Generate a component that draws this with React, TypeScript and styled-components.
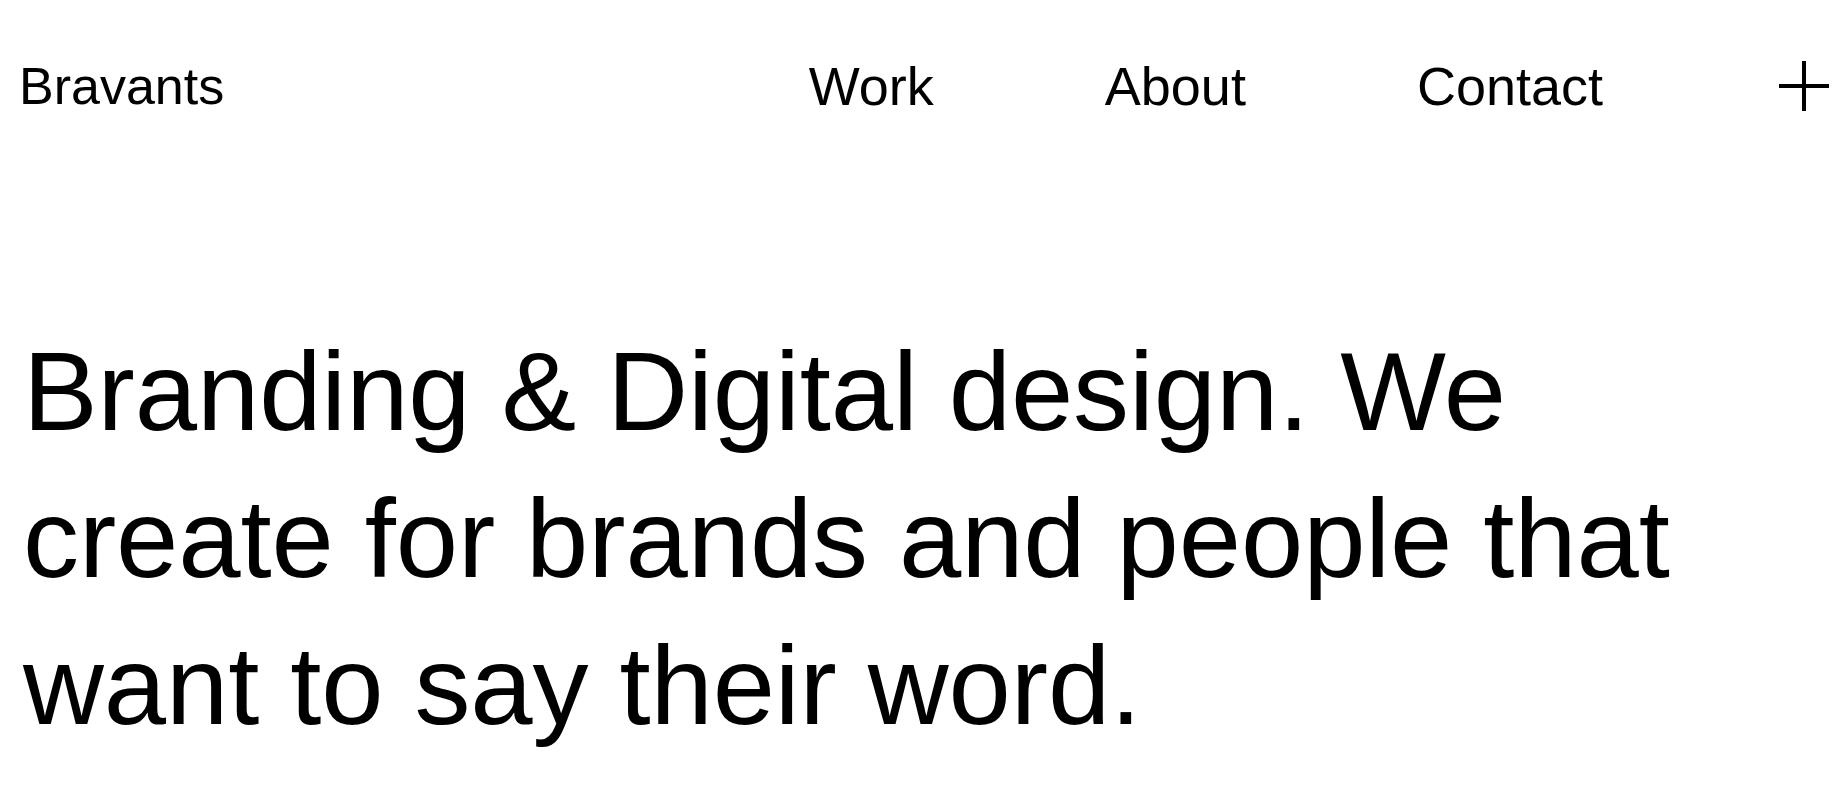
import React from "react";
import styled, { createGlobalStyle } from "styled-components";

const GlobalStyle = createGlobalStyle`
  html, body {
    margin: 0;
    padding: 0;
    background: #ffffff;
    color: #000000;
    font-family: "Liberation Sans", Arial, Helvetica, sans-serif;
    overflow: hidden;
  }
  * { box-sizing: border-box; }
`;

const Page = styled.div`
  width: 1841px;
  height: 797px;
  overflow: hidden;
  background: #fff;
`;

const Header = styled.header`
  display: flex;
  align-items: center;
  padding: 59px 12px 0 19px;
`;

const Logo = styled.a`
  font-size: 52px;
  line-height: 1;
  color: #000;
  text-decoration: none;
`;

const Nav = styled.nav`
  margin-left: auto;
  display: flex;
  gap: 171px;
`;

const NavLink = styled.a`
  font-size: 54px;
  line-height: 1;
  color: #000;
  text-decoration: none;
`;

const PlusButton = styled.button`
  margin-left: 176px;
  width: 50px;
  height: 50px;
  padding: 0;
  border: none;
  background: transparent;
  display: flex;
  align-items: center;
  justify-content: center;
  cursor: pointer;
`;

const Hero = styled.section`
  padding: 205px 18px 0 23px;
`;

const Headline = styled.h1`
  margin: 0;
  max-width: 1760px;
  font-size: 112px;
  line-height: 147px;
  font-weight: 400;
  letter-spacing: -0.1px;
  color: #000;
`;

export default function App() {
  return (
    <Page>
      <GlobalStyle />
      <Header>
        <Logo href="#">Bravants</Logo>
        <Nav>
          <NavLink href="#">Work</NavLink>
          <NavLink href="#">About</NavLink>
          <NavLink href="#">Contact</NavLink>
        </Nav>
        <PlusButton aria-label="Open menu">
          <svg width="50" height="50" viewBox="0 0 50 50">
            <line x1="25" y1="0" x2="25" y2="50" stroke="#000" strokeWidth="4" />
            <line x1="0" y1="25" x2="50" y2="25" stroke="#000" strokeWidth="4" />
          </svg>
        </PlusButton>
      </Header>
      <Hero>
        <Headline>
          Branding &amp; Digital design. We create for brands and people that
          want to say their word.
        </Headline>
      </Hero>
    </Page>
  );
}
